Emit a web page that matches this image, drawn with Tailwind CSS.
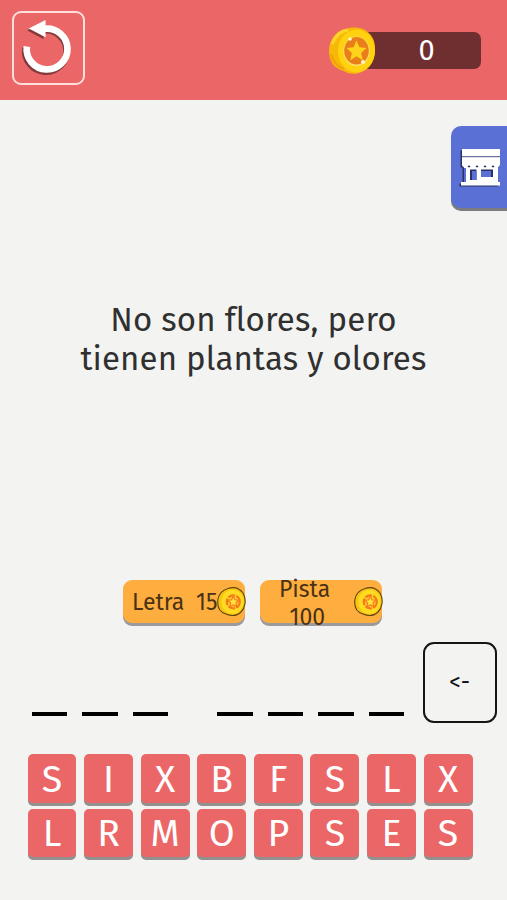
<!DOCTYPE html>
<html lang="es">
<head>
<meta charset="utf-8">
<title>Adivinanzas</title>
<script src="https://cdn.jsdelivr.net/npm/@tailwindcss/browser@4"></script>
</head>
<body class="bg-[#f3f3f1]">
<svg class="hidden">
  <defs>
    <symbol id="small-coin" viewBox="0 0 30 30">
      <path d="M12 1.500C17-.2 23 .6 27 6c4 7 2 15-2 19-4 4-10 4-15 2-7-2-9-8-8-15C3 7 7 3 12 1.500Z" fill="#f7c414" stroke="#62430b" stroke-width="1.100"/>
      <ellipse cx="16.500" cy="14.800" rx="11" ry="12" fill="#ffdc22"/>
      <circle cx="17.300" cy="14.800" r="6.500" fill="#ffd32a" stroke="#f57a1b" stroke-width="2.200" stroke-dasharray="7 1.200"/>
      <path d="m17.300 9.300 1.700 3.500 4 .5-3 2.700.8 3.900-3.500-1.900-3.500 1.900.8-3.900-3-2.700 4-.5Z" fill="#ffe23c" stroke="#f57a1b" stroke-width="1.200"/>
    </symbol>
  </defs>
</svg>
<div class="relative flex h-[900px] w-[507px] flex-col overflow-hidden bg-[#f3f3f1] font-['Fira_Sans','Noto_Sans',sans-serif]">
  <header class="flex h-[99.500px] shrink-0 items-start justify-between bg-[#eb6767] pl-[12px] pr-[26px] pt-[11px]">
    <button class="h-[74px] w-[73px] rounded-[9px] border-2 border-[#ffdfda]" aria-label="Reiniciar">
      <svg class="block h-full w-full" viewBox="13.500 12.500 70 71">
        <g transform="translate(-1.500 2)" fill="none" stroke="#843a3a" stroke-width="6.500"><path d="M26.500 46a21 21 0 1 0 18.500-17.700"/><path d="M45 19v18L28.500 28.300Z" fill="#843a3a" stroke="none"/></g>
        <path d="M26.500 46.500a20.700 20.700 0 1 0 18-18" fill="none" stroke="#fff" stroke-width="6.800"/>
        <path d="M45.500 19.500V37L28.500 28.300Z" fill="#fff"/>
      </svg>
    </button>
    <div class="relative mt-[20.500px] flex h-[37.500px] w-[126px] items-center justify-center rounded-r-[7px] bg-[#6f2e30] pl-[17px]">
      <svg class="absolute -left-[27px] -top-[4.500px] h-[48px] w-[50px]" viewBox="0 0 50 48">
        <path d="M21 1C32-1 42 3 46 14c4 16-4 29-15 32-7 2-12 0-15-2C7 42 1 35 1 24 1 13 8 4 17 2Z" fill="#f8b807"/>
        <path d="M4 17C7 9 12 4 20 3" fill="none" stroke="#ffd52c" stroke-width="3"/>
        <path d="M3 27c2 8 7 13 13 15" fill="none" stroke="#f39f0b" stroke-width="2"/>
        <ellipse cx="28.500" cy="24" rx="18.500" ry="21.500" fill="#ffd10f"/>
        <ellipse cx="28.500" cy="24.300" rx="13.300" ry="14.800" fill="#ffe066"/>
        <ellipse cx="28.500" cy="23.800" rx="12.300" ry="13.800" fill="#ea7f1a"/>
        <path d="m28.500 13.500 2.900 6.700 7 .7-5.300 5 1.700 7.400-6.300-4-6.300 4 1.700-7.400-5.300-5 7-.7Z" fill="#ffd31c"/>
        <circle cx="22" cy="12" r="1.800" fill="#fff3cb"/><circle cx="35" cy="35" r="2" fill="#fff3cb"/>
      </svg>
      <span class="text-[29px] leading-none text-white">0</span>
    </div>
  </header>

  <button class="mt-[26.500px] flex h-[81.500px] w-[56px] shrink-0 items-start self-end rounded-l-[10px] bg-[#5b70d5] pl-[8px] pt-[21px] shadow-[0_3px_0_#7b7b80]" aria-label="Tienda">
    <svg class="h-[42px] w-[46px]" viewBox="0 0 46 42">
      <g transform="translate(-1.500 1.500)" fill="#283267"><path d="M3 2h38v17H3ZM5 17h34v18H5ZM2 35h38v3H2Z"/></g>
      <path d="M3 2h38v16l-2 2.500-4.500-2-4 2-4-2-4.500 2-4.500-2-4.500 2-4-2L5 20.500l-2-2Z" fill="#fff"/>
      <path d="M5 17h34v18h2v3.500H2V35h3Z" fill="#fff"/>
      <path d="M3 9.700h38" stroke="#47508c" stroke-width="1"/>
      <path d="m9 20 1-1 1 1m6 0 1-1 1 1m6 0 1-1 1 1m6 0 1-1 1 1" fill="none" stroke="#283267" stroke-width="1.200"/>
      <path d="M11 22.500h6.500V33H11ZM22 22.500h12V30H22Z" fill="#283267"/>
      <path d="M13 24h4.500v9H13ZM22 24h10v6H22Z" fill="#5b70d5"/>
      <path d="M6 21v14" stroke="#5b70d5" stroke-width="2"/>
    </svg>
  </button>

  <main class="mt-[93.500px] flex h-[78px] shrink-0 flex-col items-center whitespace-nowrap text-[33px] leading-[39px] tracking-[0.150px] text-[#303030]">
    <div>No son flores, pero</div>
    <div>tienen plantas y olores</div>
  </main>

  <div class="mt-[201px] flex h-[43px] shrink-0 gap-[15px] pl-[123px] text-[23px] leading-[27px] text-[#4a3214]">
    <button class="relative flex w-[122px] items-center rounded-[9px] bg-[#feae3f] pl-[9px] pt-px shadow-[0_3px_0_#9b9b9e]">
      <span class="w-[64px] text-left">Letra</span><span>15</span>
      <svg class="absolute -right-[1px] top-[7px] h-[30px] w-[30px]"><use href="#small-coin"/></svg>
    </button>
    <button class="relative -ml-[0.500px] w-[122px] rounded-[9px] bg-[#feae3f] shadow-[0_3px_0_#9b9b9e]">
      <span class="absolute left-[19.500px] -top-[4px]">Pista</span>
      <span class="absolute left-[30px] top-[24px]">100</span>
      <svg class="absolute -right-[1px] top-[7px] h-[30px] w-[30px]"><use href="#small-coin"/></svg>
    </button>
  </div>

  <div class="mt-[19px] flex h-[81px] shrink-0 items-end pl-[31.500px]">
    <div class="mb-[7px] flex w-[391.500px] gap-[15px]">
      <i class="h-[4px] w-[35.500px] bg-black"></i><i class="h-[4px] w-[35.500px] bg-black"></i><i class="h-[4px] w-[35.500px] bg-black"></i>
      <i class="ml-[34px] h-[4px] w-[35.500px] bg-black"></i><i class="h-[4px] w-[35.500px] bg-black"></i><i class="h-[4px] w-[35.500px] bg-black"></i><i class="h-[4px] w-[35.500px] bg-black"></i>
    </div>
    <button class="flex h-[81px] w-[73.500px] items-center justify-center rounded-[11px] border-2 border-[#151515] pb-[1px] text-[23px] text-[#111]">&lt;-</button>
  </div>

  <div class="mt-[31px] grid w-[445px] grid-cols-8 gap-x-[7.600px] gap-y-[6px] self-start ml-[27.500px] text-[37.500px] leading-none text-white *:flex *:h-[48.500px] *:items-center *:justify-center *:rounded-[5px] *:bg-[#eb6767] *:pt-[2px] *:shadow-[0_3px_0_#929190]">
    <button>S</button><button>I</button><button>X</button><button>B</button><button>F</button><button>S</button><button>L</button><button>X</button>
    <button>L</button><button>R</button><button>M</button><button>O</button><button>P</button><button>S</button><button>E</button><button>S</button>
  </div>
</div>
</body>
</html>
